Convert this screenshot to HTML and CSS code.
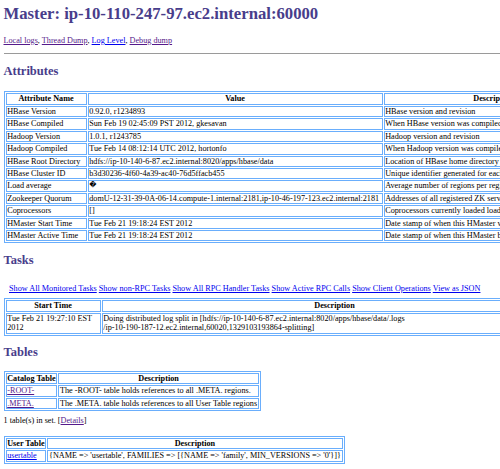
FILE: index.html
```html
<!DOCTYPE html>
<html>
<head>
<meta charset="utf-8">
<title>Master: ip-10-110-247-97.ec2.internal:60000</title>
<link rel="stylesheet" href="styles.css">
</head>
<body>
<h1 class="title">Master: ip-10-110-247-97.ec2.internal:60000</h1>
<p class="links"><a class="visited" href="#">Local logs</a>, <a class="visited" href="#">Thread Dump</a>, <a href="#">Log Level</a>, <a class="visited" href="#">Debug dump</a></p>
<hr class="rule">

<h2 class="section sec-attrs">Attributes</h2>
<table class="grid attrs">
<tr><th class="c-name">Attribute Name</th><th class="c-value">Value</th><th class="c-desc">Description</th></tr>
<tr><td>HBase Version</td><td>0.92.0, r1234893</td><td>HBase version and revision</td></tr>
<tr><td>HBase Compiled</td><td>Sun Feb 19 02:45:09 PST 2012, gkesavan</td><td>When HBase version was compiled and by whom</td></tr>
<tr><td>Hadoop Version</td><td>1.0.1, r1243785</td><td>Hadoop version and revision</td></tr>
<tr><td>Hadoop Compiled</td><td>Tue Feb 14 08:12:14 UTC 2012, hortonfo</td><td>When Hadoop version was compiled and by whom</td></tr>
<tr><td>HBase Root Directory</td><td>hdfs://ip-10-140-6-87.ec2.internal:8020/apps/hbase/data</td><td>Location of HBase home directory</td></tr>
<tr><td>HBase Cluster ID</td><td>b3d30236-4f60-4a39-ac40-76d5ffacb455</td><td>Unique identifier generated for each HBase cluster</td></tr>
<tr><td>Load average</td><td class="glyph">&#xFFFD;</td><td>Average number of regions per regionserver. Naive computation.</td></tr>
<tr><td>Zookeeper Quorum</td><td>domU-12-31-39-0A-06-14.compute-1.internal:2181,ip-10-46-197-123.ec2.internal:2181</td><td>Addresses of all registered ZK servers. For more, see <a href="#">zk dump</a>.</td></tr>
<tr><td>Coprocessors</td><td>[]</td><td>Coprocessors currently loaded loaded by the master</td></tr>
<tr><td>HMaster Start Time</td><td>Tue Feb 21 19:18:24 EST 2012</td><td>Date stamp of when this HMaster was started</td></tr>
<tr><td>HMaster Active Time</td><td>Tue Feb 21 19:18:24 EST 2012</td><td>Date stamp of when this HMaster became active</td></tr>
</table>

<h2 class="section sec-tasks">Tasks</h2>
<div class="tasks-menu">
<a href="#">Show All Monitored Tasks</a>
<a href="#">Show non-RPC Tasks</a>
<a href="#">Show All RPC Handler Tasks</a>
<a href="#">Show Active RPC Calls</a>
<a href="#">Show Client Operations</a>
<a href="#">View as JSON</a>
</div>
<table class="grid tasks">
<tr><th class="c-start">Start Time</th><th class="c-task">Description</th></tr>
<tr><td class="wrap">Tue Feb 21 19:27:10 EST 2012</td><td>Doing distributed log split in [hdfs://ip-10-140-6-87.ec2.internal:8020/apps/hbase/data/.logs<br>/ip-10-190-187-12.ec2.internal,60020,1329103193864-splitting]</td></tr>
</table>

<h2 class="section sec-tables">Tables</h2>
<table class="grid catalog">
<tr><th>Catalog Table</th><th>Description</th></tr>
<tr><td><a class="visited" href="#">-ROOT-</a></td><td>The -ROOT- table holds references to all .META. regions.</td></tr>
<tr><td><a class="visited" href="#">.META.</a></td><td>The .META. table holds references to all User Table regions</td></tr>
</table>

<p class="count">1 table(s) in set. [<a class="visited" href="#">Details</a>]</p>

<table class="grid user">
<tr><th>User Table</th><th>Description</th></tr>
<tr><td><a href="#">usertable</a></td><td>{NAME =&gt; 'usertable', FAMILIES =&gt; [{NAME =&gt; 'family', MIN_VERSIONS =&gt; '0'}]}</td></tr>
</table>
</body>
</html>
```

FILE: styles.css
```css
html {
  overflow: hidden;
  background: #fff;
}

body {
  margin: 0;
  padding: 4px 0 0 3.5px;
  font-family: "Liberation Serif", "DejaVu Serif", serif;
  font-size: 8.2px;
  line-height: 9.4px;
  color: #000;
  background: #fff;
}

a {
  color: #0000ee;
  text-decoration: underline;
}

a.visited {
  color: #551a8b;
}

h1,
h2 {
  margin: 0;
  color: #483d8b;
  font-weight: bold;
}

.title {
  font-size: 16.7px;
  line-height: 20px;
  white-space: nowrap;
}

.links {
  margin: 11.5px 0 0;
  white-space: nowrap;
}

.rule {
  margin: 8.1px 0 0;
  border: 0;
  height: 1.3px;
  background: #9a9a9a;
}

.section {
  font-size: 12.5px;
  line-height: 14px;
}

.sec-attrs {
  margin-top: 9.5px;
}

.sec-tasks {
  margin-top: 9.8px;
}

.sec-tables {
  margin-top: 9.2px;
}

/* tables */
.grid {
  border: 1px solid #6aaefc;
  border-collapse: separate;
  border-spacing: 1px;
}

.grid th,
.grid td {
  box-sizing: border-box;
  border: 1px solid #6aaefc;
  padding: 0 0.7px;
  white-space: nowrap;
  overflow: hidden;
}

.grid th {
  font-weight: bold;
  text-align: center;
}

.grid td {
  text-align: left;
}

.glyph {
  font-family: "DejaVu Sans", sans-serif;
  font-size: 7px;
}

.attrs {
  margin-top: 13.7px;
  table-layout: fixed;
  width: 602px;
}

.attrs .c-name {
  width: 81px;
}

.attrs .c-value {
  width: 295px;
}

.attrs .c-desc {
  width: 220px;
}

.tasks-menu {
  margin-top: 10.9px;
  padding: 5.5px;
  white-space: nowrap;
}

.tasks {
  table-layout: fixed;
  width: 566px;
}

.tasks .c-start {
  width: 95px;
}

.tasks .c-task {
  width: 466px;
}

.grid td.wrap {
  white-space: normal;
}

.catalog {
  margin-top: 12.2px;
}

.count {
  margin: 5px 0 0;
}

.user {
  margin-top: 10.4px;
}
```
